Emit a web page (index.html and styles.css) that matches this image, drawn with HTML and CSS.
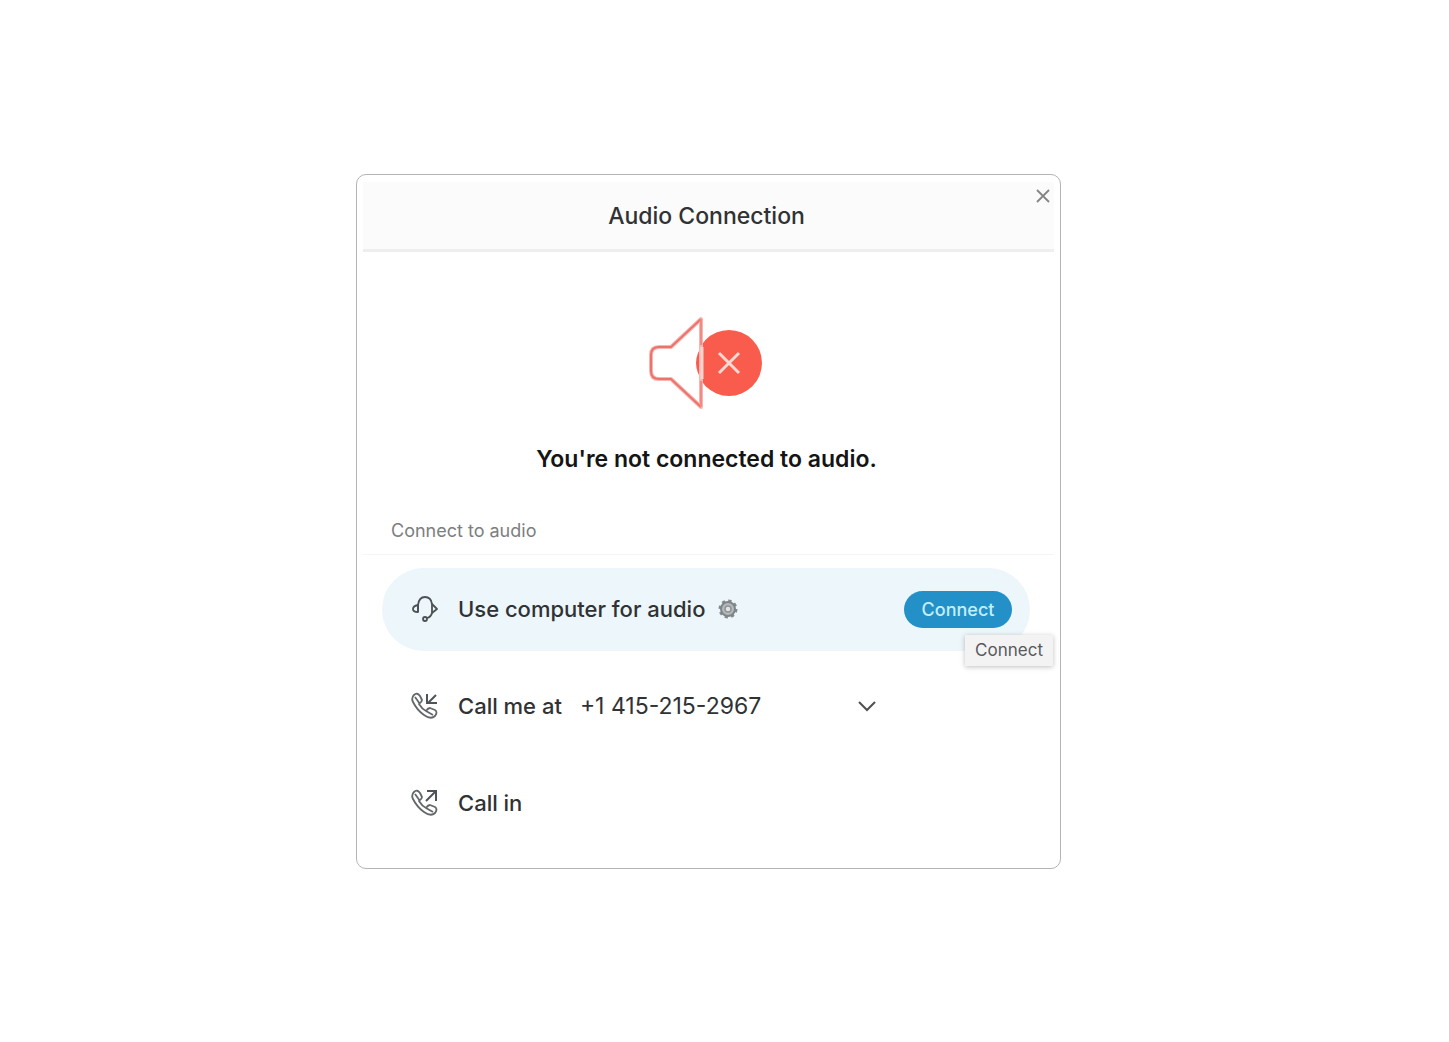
FILE: index.html
```html
<!DOCTYPE html>
<html lang="en">
<head>
<meta charset="utf-8">
<meta name="viewport" content="width=device-width, initial-scale=1">
<title>Audio Connection</title>
<link rel="stylesheet" href="styles.css">
</head>
<body>
<main class="stage">
  <section class="dialog" role="dialog" aria-labelledby="dialog-title">
    <header class="dialog-header">
      <h1 class="dialog-title" id="dialog-title">Audio Connection</h1>
      <button class="close" type="button" aria-label="Close">
        <svg width="14" height="14" viewBox="0 0 14 14"><path d="M1 1L13 13M13 1L1 13" fill="none" stroke="#858585" stroke-width="1.8"/></svg>
      </button>
    </header>

    <div class="status">
      <svg class="speaker" width="120" height="96" viewBox="0 0 120 96" aria-hidden="true">
        <circle cx="82" cy="48" r="33" fill="#f95c4c"/>
        <path d="M3 40Q3 31 12 31H23L54 4V92L23 64H12Q3 64 3 55Z" fill="#fff"/>
        <path d="M51 38Q47 48 51 58L53 62V34Z" fill="#f95c4c"/>
        <path d="M4 40Q4 32 12 32H24L54 4V92L24 64H12Q4 64 4 56Z" fill="none" stroke="#f9b5b0" stroke-width="4" stroke-linejoin="round"/>
        <path d="M54 4L24 32H12Q4 32 4 40V56Q4 64 12 64H24L54 92" fill="none" stroke="#ec736c" stroke-width="2" stroke-linejoin="round"/>
        <path d="M54 4V30M54 66V92" fill="none" stroke="#f08a84" stroke-width="2"/>
        <path d="M55 32V64" fill="none" stroke="#fbd4d0" stroke-width="3"/>
        <path d="M72 38L92 58M92 38L72 58" fill="none" stroke="#fcd8d3" stroke-width="3"/>
      </svg>
      <p class="status-text">You're not connected to audio.</p>
    </div>

    <h2 class="section-label">Connect to audio</h2>

    <div class="options">
      <div class="option option-active">
        <svg class="option-icon" width="28" height="28" viewBox="0 0 28 28" aria-hidden="true"><g fill="none" stroke="#4c5154" stroke-width="1.8" stroke-linejoin="round"><path d="M7 17V10Q8 2 14 2T21 9V18Q20 22 16 23"/><path d="M7 10Q2 11 2 14T7 17ZM21 9L26 14L21 18"/><circle cx="14" cy="24" r="2"/></g></svg>
        <span class="option-name">Use computer for audio</span>
        <button class="settings" type="button" aria-label="Audio settings">
          <svg width="20" height="20" viewBox="0 0 20 20"><circle cx="10" cy="10" r="8" fill="none" stroke="#858a8d" stroke-width="3" stroke-dasharray="3.14 3.14"/><circle cx="10" cy="10" r="7" fill="#b4b9bb" stroke="#7f8588" stroke-width="2"/><circle cx="10" cy="10" r="3" fill="#dfe4e5" stroke="#8f9497" stroke-width="1.5"/></svg>
        </button>
        <div class="connect-wrap">
          <button class="connect" type="button" aria-describedby="connect-tip">Connect</button>
          <span class="tooltip" id="connect-tip" role="tooltip">Connect</span>
        </div>
      </div>

      <div class="option">
        <svg class="option-icon" width="28" height="28" viewBox="0 0 28 28" aria-hidden="true"><path d="M3 3Q6 0 9 4L11 8Q11 10 8 12Q11 17 15 19Q17 16 19 16L24 18Q27 20 24 24Q20 28 13 23Q6 18 2 10Q0 6 3 3ZM9 12L4 5M15 19L22 23" fill="none" stroke="#63676a" stroke-width="1.8" stroke-linejoin="round"/><path d="M25 3L17 11M16 2V11H26" fill="none" stroke="#505458" stroke-width="2"/></svg>
        <label class="option-name" for="phone">Call me at</label>
        <div class="phone">
          <select class="phone-select" id="phone"><option>+1 415-215-2967</option></select>
          <svg class="chevron" width="18" height="14" viewBox="0 0 18 14" aria-hidden="true"><path d="M1 3L9 11L17 3" fill="none" stroke="#505050" stroke-width="2"/></svg>
        </div>
      </div>

      <div class="option">
        <svg class="option-icon" width="28" height="28" viewBox="0 0 28 28" aria-hidden="true"><path d="M3 3Q6 0 9 4L11 8Q11 10 8 12Q11 17 15 19Q17 16 19 16L24 18Q27 20 24 24Q20 28 13 23Q6 18 2 10Q0 6 3 3ZM9 12L4 5M15 19L22 23" fill="none" stroke="#63676a" stroke-width="1.8" stroke-linejoin="round"/><path d="M15 12L25 2M16 2H25V12" fill="none" stroke="#505458" stroke-width="2"/></svg>
        <span class="option-name">Call in</span>
      </div>
    </div>
  </section>
</main>
</body>
</html>
```
FILE: styles.css
```css
* { box-sizing: border-box; }

body {
  margin: 0;
  background: #fff;
  color: #303234;
  font-family: Inter, "Liberation Sans", sans-serif;
}

h1, h2, p { margin: 0; }

button, select {
  padding: 0;
  border: 0;
  background: none;
  color: inherit;
  font: inherit;
}

svg { display: block; }

.stage {
  display: flex;
  justify-content: center;
  align-items: center;
  min-height: 100vh;
  padding: 0 32px 0 0;
}

.dialog {
  width: 100%;
  max-width: 705px;
  padding: 7px 6px 23px;
  border: 1px solid #b4b4b4;
  border-radius: 10px;
}

.dialog-header {
  position: relative;
  padding: 18px 0 17px;
  border-bottom: 3px solid #eeeeec;
  background: #fbfbfb;
  text-align: center;
}

.dialog-title {
  padding-right: 4px;
  font-size: 23px;
  line-height: 32px;
  font-weight: 500;
}

.close {
  position: absolute;
  top: 7px;
  right: 4px;
}

.status {
  display: flex;
  flex-direction: column;
  align-items: center;
  gap: 32px;
  padding: 63px 4px 0 0;
}

.status-text {
  color: #151515;
  font-size: 23px;
  line-height: 32px;
  font-weight: 600;
}

.section-label {
  padding: 44px 28px 11px;
  border-bottom: 1px solid #f4f5f5;
  color: #7c7e80;
  font-size: 18px;
  line-height: 24px;
  font-weight: 400;
}

.options {
  display: grid;
  gap: 14px;
  padding: 13px 24px 0 19px;
}

.option {
  display: flex;
  align-items: center;
  min-height: 83px;
  padding: 0 18px 0 29px;
  border-radius: 42px;
}

.option-active { background: #ecf6fb; }

.option-icon { flex: none; }

.option-name {
  margin-left: 19px;
  font-size: 22px;
  line-height: 32px;
  font-weight: 500;
}

.settings { margin-left: 13px; }

.connect-wrap {
  position: relative;
  margin-left: auto;
}

.connect {
  width: 108px;
  height: 37px;
  border-radius: 19px;
  background: #2391c8;
  color: #c4eefa;
  font-size: 18px;
  font-weight: 500;
}

.tooltip {
  position: absolute;
  top: 44px;
  right: -41px;
  padding: 4px 10px;
  background: #f3f3f3;
  box-shadow: 0 1px 5px rgba(0, 0, 0, 0.25);
  color: #58595b;
  font-size: 17px;
  line-height: 23px;
}

.phone {
  display: grid;
  align-items: center;
  width: 296px;
  margin-left: 18px;
}

.phone-select, .chevron { grid-area: 1 / 1; }

.phone-select {
  width: 100%;
  height: 32px;
  appearance: none;
  font-size: 23px;
}

.chevron {
  justify-self: end;
  pointer-events: none;
}
```
